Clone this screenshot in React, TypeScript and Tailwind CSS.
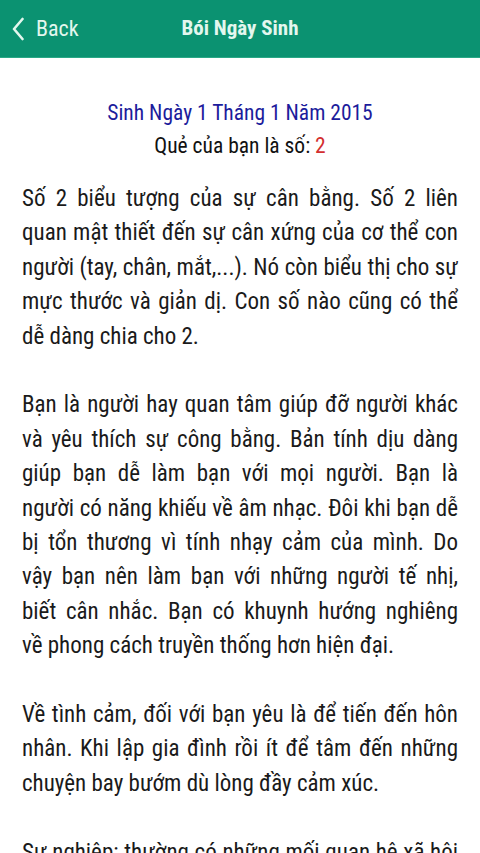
import React from 'react'

const font = { fontFamily: '"Roboto Condensed", Roboto, "Liberation Sans", sans-serif' }

const paragraphs: string[][] = [
  [
    'Số 2 biểu tượng của sự cân bằng. Số 2 liên',
    'quan mật thiết đến sự cân xứng của cơ thể con',
    'người (tay, chân, mắt,...). Nó còn biểu thị cho sự',
    'mực thước và giản dị. Con số nào cũng có thể',
    'dễ dàng chia cho 2.',
  ],
  [
    'Bạn là người hay quan tâm giúp đỡ người khác',
    'và yêu thích sự công bằng. Bản tính dịu dàng',
    'giúp bạn dễ làm bạn với mọi người. Bạn là',
    'người có năng khiếu về âm nhạc. Đôi khi bạn dễ',
    'bị tổn thương vì tính nhạy cảm của mình. Do',
    'vậy bạn nên làm bạn với những người tế nhị,',
    'biết cân nhắc. Bạn có khuynh hướng nghiêng',
    'về phong cách truyền thống hơn hiện đại.',
  ],
  [
    'Về tình cảm, đối với bạn yêu là để tiến đến hôn',
    'nhân. Khi lập gia đình rồi ít để tâm đến những',
    'chuyện bay bướm dù lòng đầy cảm xúc.',
  ],
  [
    'Sự nghiệp: thường có những mối quan hệ xã hội',
    'rộng rãi và được nhiều người quý mến.',
  ],
]

export default function App() {
  return (
    <div className="h-[853px] w-[480px] overflow-hidden bg-white" style={font}>
      <header className="relative flex h-[58px] items-center justify-center border-b border-[#2aa886] bg-[#0b9271]">
        <button className="absolute left-[12px] top-0 flex h-full items-center gap-[12px] text-[#e3f7ee]">
          <svg width="12" height="24" viewBox="0 0 12 24" fill="none">
            <path d="M10.5 2 L2 12 L10.5 22" stroke="#e3f7ee" strokeWidth="2.6" strokeLinecap="round" strokeLinejoin="round" />
          </svg>
          <span className="text-[22px] leading-none">Back</span>
        </button>
        <h1 className="text-[21px] font-bold leading-none text-[#e3f7ee]">Bói Ngày Sinh</h1>
      </header>

      <div className="pt-[38px] text-center text-[21.5px] leading-[33px]">
        <p className="text-[#1c1c9c]">Sinh Ngày 1 Tháng 1 Năm 2015</p>
        <p className="text-[#111]">
          Quẻ của bạn là số: <span className="text-[#d32f2f]">2</span>
        </p>
      </div>

      <div className="mt-[20px] flex flex-col gap-[34.4px] px-[22px] text-[23px] leading-[34.4px] text-[#1a1a1a]">
        {paragraphs.map((lines, i) => (
          <div key={i}>
            {lines.map((line, j) => (
              <div
                key={j}
                className={
                  j < lines.length - 1
                    ? 'whitespace-nowrap text-justify [text-align-last:justify]'
                    : 'whitespace-nowrap text-left'
                }
              >
                {line}
              </div>
            ))}
          </div>
        ))}
      </div>
    </div>
  )
}
